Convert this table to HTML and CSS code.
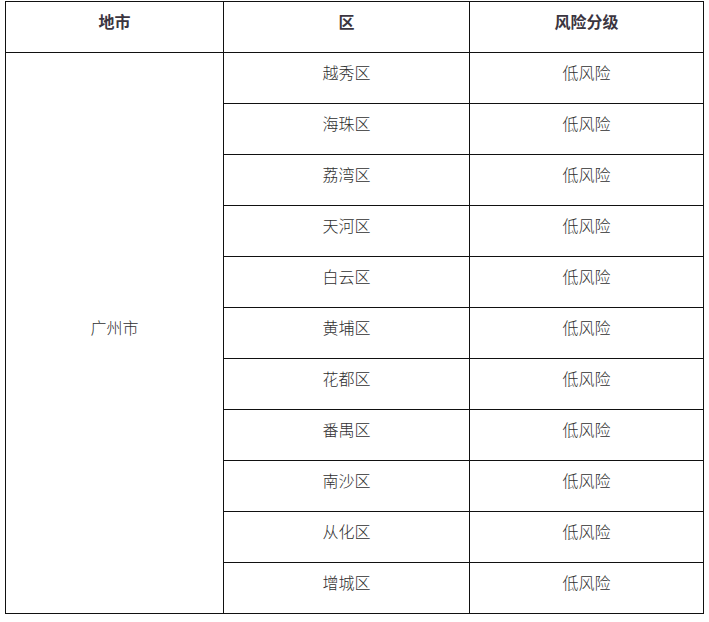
FILE: index.html
```html
<!DOCTYPE html>
<html lang="zh-CN">
<head>
<meta charset="utf-8">
<title>风险分级</title>
<link rel="stylesheet" href="styles.css">
</head>
<body>
<div class="grid">
  <div class="cell head">地市</div>
  <div class="cell head">区</div>
  <div class="cell head">风险分级</div>
  <div class="cell city">广州市</div>
  <div class="cell">越秀区</div><div class="cell">低风险</div>
  <div class="cell">海珠区</div><div class="cell">低风险</div>
  <div class="cell">荔湾区</div><div class="cell">低风险</div>
  <div class="cell">天河区</div><div class="cell">低风险</div>
  <div class="cell">白云区</div><div class="cell">低风险</div>
  <div class="cell">黄埔区</div><div class="cell">低风险</div>
  <div class="cell">花都区</div><div class="cell">低风险</div>
  <div class="cell">番禺区</div><div class="cell">低风险</div>
  <div class="cell">南沙区</div><div class="cell">低风险</div>
  <div class="cell">从化区</div><div class="cell">低风险</div>
  <div class="cell">增城区</div><div class="cell">低风险</div>
</div>
</body>
</html>
```
FILE: styles.css
```css
html, body {
  margin: 0;
  padding: 0;
  background: #fff;
}
body {
  font-family: "Noto Sans CJK SC", "Noto Sans", sans-serif;
  font-size: 16px;
  color: #333;
}
.grid {
  display: grid;
  grid-template-columns: 217px 245px 233px;
  grid-template-rows: repeat(12, 50px);
  gap: 1px;
  padding: 1px;
  background: #111;
  width: max-content;
  margin: 1px 0 0 5px;
}
.cell {
  background: #fff;
  display: flex;
  align-items: center;
  justify-content: center;
  padding-bottom: 13px;
  line-height: 20px;
  font-weight: 300;
  color: #2f2f2f;
}
.head {
  font-weight: 700;
  color: #3b3540;
}
.city {
  grid-row: 2 / span 11;
}
```
